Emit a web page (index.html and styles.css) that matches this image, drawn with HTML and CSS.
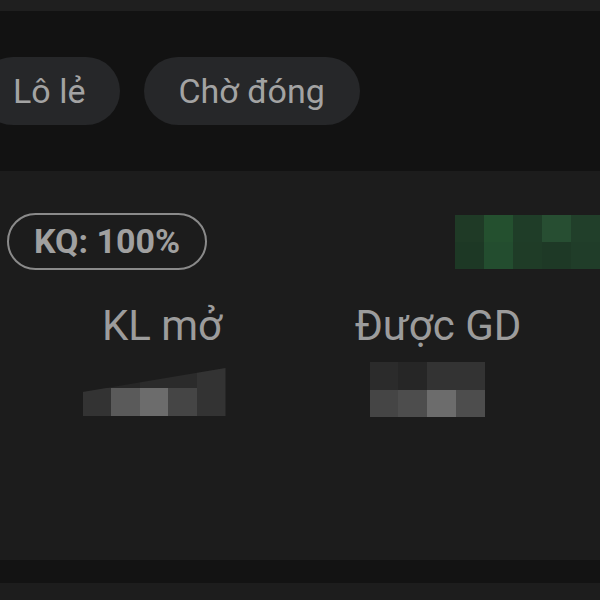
FILE: index.html
```html
<!DOCTYPE html>
<html lang="vi">
<head>
    <meta charset="UTF-8">
    <meta name="viewport" content="width=device-width, initial-scale=1.0">
    <title>Lệnh chờ</title>
    <link rel="stylesheet" href="styles.css">
</head>
<body>
    <div class="top-strip"></div>

    <div class="tabs">
        <button class="chip">Lô lẻ</button>
        <button class="chip">Chờ đóng</button>
    </div>

    <div class="card">
        <div class="card-head">
            <span class="badge">KQ: 100%</span>
            <!-- blurred value -->
            <div class="mosaic mosaic-green">
                <i class="g1"></i><i class="g2"></i><i class="g3"></i><i class="g4"></i><i class="g5"></i>
                <i class="g6"></i><i class="g7"></i><i class="g8"></i><i class="g9"></i><i class="g10"></i>
            </div>
        </div>

        <div class="stats">
            <div class="stat">
                <div class="stat-label">KL mở</div>
                <div class="mosaic mosaic-gray cols-5 sloped">
                    <i class="s1"></i><i class="s1"></i><i class="s2"></i><i class="s2"></i><i class="s3"></i>
                    <i class="s3"></i><i class="s5"></i><i class="s6"></i><i class="s4"></i><i class="s3"></i>
                    <span class="glint"></span>
                </div>
            </div>
            <div class="stat">
                <div class="stat-label">Được GD</div>
                <div class="mosaic mosaic-gray cols-4">
                    <i class="s2"></i><i class="s1"></i><i class="s3"></i><i class="s3"></i>
                    <i class="s4"></i><i class="s4b"></i><i class="s6"></i><i class="s4b"></i>
                </div>
            </div>
        </div>
    </div>

    <div class="divider"></div>
    <div class="next-card"></div>
</body>
</html>
```

FILE: styles.css
```css
body {
    margin: 0;
    background-color: #121212;
    font-family: Roboto, "Noto Sans", sans-serif;
    overflow: hidden;
}

.top-strip {
    height: 11px;
    background-color: #1f1f1f;
}

.tabs {
    height: 160px;
    box-sizing: border-box;
    padding-top: 46px;
    display: flex;
    gap: 24px;
    margin-left: -21px;
}

.chip {
    height: 68px;
    padding: 0 35px 0 34px;
    border: none;
    border-radius: 34px;
    background-color: #262729;
    color: #a3a3a3;
    font-family: inherit;
    font-size: 34px;
    line-height: 68px;
}

.card {
    height: 389px;
    box-sizing: border-box;
    background-color: #1c1c1c;
    padding-top: 42px;
}

.card-head {
    display: flex;
    justify-content: space-between;
    align-items: flex-start;
    padding-left: 7px;
}

.badge {
    height: 53px;
    padding: 0 25px;
    border: 2px solid #8a8a8a;
    border-radius: 30px;
    color: #a0a0a0;
    font-size: 34px;
    font-weight: 700;
    line-height: 53px;
}

.mosaic {
    display: grid;
    position: relative;
}

.mosaic i {
    display: block;
}

.mosaic-green {
    width: 145px;
    height: 54px;
    margin-top: 2px;
    grid-template-columns: repeat(5, 1fr);
}

.g1 { background-color: #1f3a26; }
.g2 { background-color: #24502f; }
.g3 { background-color: #1f3d28; }
.g4 { background-color: #274e32; }
.g5 { background-color: #213f2a; }
.g6 { background-color: #1d3825; }
.g7 { background-color: #234d2f; }
.g8 { background-color: #1f3c27; }
.g9 { background-color: #1e3926; }
.g10 { background-color: #203d29; }

.stats {
    display: grid;
    grid-template-columns: 276px 276px;
    padding-left: 24px;
    margin-top: 32px;
}

.stat {
    display: flex;
    flex-direction: column;
    align-items: center;
}

.stat-label {
    color: #9c9c9c;
    font-size: 42px;
    line-height: 48px;
}

.mosaic-gray {
    margin-top: 10px;
    margin-right: 16px;
    height: 56px;
}

.cols-5 {
    width: 143px;
    grid-template-columns: repeat(5, 1fr);
}

.cols-4 {
    width: 115px;
    margin-top: 12px;
    margin-right: 22px;
    height: 55px;
    grid-template-columns: repeat(4, 1fr);
}

.sloped {
    clip-path: polygon(0 32px, 100% 8px, 100% 100%, 0 100%);
}

.s1 { background-color: #262626; }
.s2 { background-color: #2b2b2b; }
.s3 { background-color: #333333; }
.s4 { background-color: #454545; }
.s4b { background-color: #4d4d4d; }
.s5 { background-color: #5a5a5a; }
.s6 { background-color: #6c6c6c; }

.glint {
    position: absolute;
    left: 35px;
    top: 21px;
    width: 8px;
    height: 3px;
    border-radius: 50%;
    background-color: #e8e8e8;
}

.divider {
    height: 23px;
    background-color: #131313;
}

.next-card {
    height: 40px;
    background-color: #1d1d1d;
}
```
